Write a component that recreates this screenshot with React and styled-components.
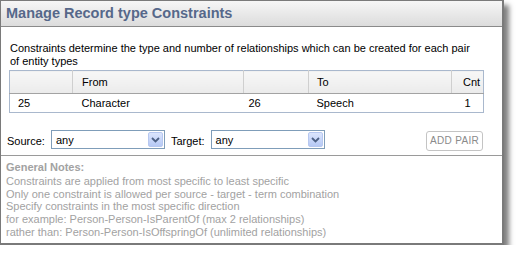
import React from 'react';
import styled, { createGlobalStyle } from 'styled-components';

const GlobalStyle = createGlobalStyle`
  html, body {
    margin: 0;
    padding: 0;
    background: #fff;
  }
  body {
    font-family: 'Liberation Sans', Arial, sans-serif;
    font-size: 11px;
    color: #000;
  }
`;

const columns = [
  { key: 'fromId', label: '', width: 63, pad: 8 },
  { key: 'from', label: 'From', width: 171, pad: 9 },
  { key: 'toId', label: '', width: 65, pad: 5 },
  { key: 'to', label: 'To', width: 143, pad: 8 },
  { key: 'cnt', label: 'Cnt', width: 32, pad: 11 },
];

const rows = [{ fromId: '25', from: 'Character', toId: '26', to: 'Speech', cnt: '1' }];

const notes = [
  'Constraints are applied from most specific to least specific',
  'Only one constraint is allowed per source - target - term combination',
  'Specify constraints in the most specific direction',
  'for example: Person-Person-IsParentOf (max 2 relationships)',
  'rather than: Person-Person-IsOffspringOf (unlimited relationships)',
];

const Chevron = () => (
  <svg width="9" height="6" viewBox="0 0 9 6">
    <path d="M1 1 L4.5 4.5 L8 1" fill="none" stroke="#4d6185" strokeWidth="1.8" />
  </svg>
);

const Dropdown = ({ value }) => (
  <Select>
    <SelectValue>{value}</SelectValue>
    <SelectArrow>
      <Chevron />
    </SelectArrow>
  </Select>
);

const App = () => (
  <>
    <GlobalStyle />
    <Window>
      <TitleBar>Manage Record type Constraints</TitleBar>

      <Body>
        <Intro>
          <div>Constraints determine the type and number of relationships which can be created for each pair</div>
          <div>of entity types</div>
        </Intro>

        <Table>
          <colgroup>
            {columns.map((c) => (
              <col key={c.key} style={{ width: c.width }} />
            ))}
          </colgroup>
          <thead>
            <tr>
              {columns.map((c) => (
                <Th key={c.key} pad={c.pad}>
                  {c.label}
                </Th>
              ))}
            </tr>
          </thead>
          <tbody>
            {rows.map((r, i) => (
              <tr key={i}>
                {columns.map((c) => (
                  <Td key={c.key} pad={c.key === 'cnt' ? 13 : c.pad}>
                    {r[c.key]}
                  </Td>
                ))}
              </tr>
            ))}
          </tbody>
        </Table>

        <Filters>
          <Label>Source:</Label>
          <Dropdown value="any" />
          <Label>Target:</Label>
          <Dropdown value="any" />
          <AddButton>ADD PAIR</AddButton>
        </Filters>
      </Body>

      <Notes>
        <NotesTitle>General Notes:</NotesTitle>
        {notes.map((n) => (
          <NoteLine key={n}>{n}</NoteLine>
        ))}
      </Notes>
    </Window>
  </>
);

export default App;

const Window = styled.div`
  width: 501px;
  border: 1px solid #7a7a7a;
  border-width: 1px 2px 2px 1px;
  background: #fff;
  box-shadow: 5px 5px 5px rgba(0, 0, 0, 0.5);
`;

const TitleBar = styled.div`
  height: 26px;
  box-sizing: border-box;
  padding: 4px 0 0 5px;
  background: linear-gradient(#f6f6f6, #dcdcdc);
  border-bottom: 1px solid #8a8a8a;
  color: #56688a;
  font-weight: bold;
  font-size: 14.5px;
  line-height: 17px;
`;

const Body = styled.div`
  padding: 15px 19px 0 8px;
`;

const Intro = styled.div`
  line-height: 13px;
  padding-left: 1px;
  margin-bottom: 2px;
  white-space: nowrap;
`;

const Table = styled.table`
  width: 474px;
  border-collapse: collapse;
  border: 1px solid #a9b8cd;
  table-layout: fixed;
`;

const Th = styled.th`
  box-sizing: border-box;
  height: 23px;
  padding: 0 0 0 ${({ pad }) => pad}px;
  text-align: left;
  font-weight: normal;
  background: linear-gradient(#f7f7f7, #ebebeb);
  border-bottom: 1px solid #a3a3a3;
  border-right: 1px solid #cfcfcf;

  &:last-child {
    border-right: none;
  }
`;

const Td = styled.td`
  box-sizing: border-box;
  height: 19px;
  padding: 0 0 0 ${({ pad }) => pad}px;
`;

const Filters = styled.div`
  display: flex;
  align-items: center;
  height: 21px;
  padding: 17px 0 4px;
  margin-left: -2px;
`;

const Label = styled.span`
  margin-right: 6px;

  & ~ & {
    margin-left: 6px;
  }
`;

const Select = styled.div`
  width: 114px;
  height: 19px;
  box-sizing: border-box;
  border: 1px solid #7f9db9;
  display: flex;
  align-items: center;
  justify-content: space-between;
  padding: 0 1px 0 4px;
  margin-top: -2px;
`;

const SelectValue = styled.span``;

const SelectArrow = styled.span`
  width: 15px;
  height: 15px;
  box-sizing: border-box;
  border: 1px solid #b7c8f0;
  border-radius: 2px;
  background: linear-gradient(#dbe5fd, #b6c9f5);
  display: flex;
  align-items: center;
  justify-content: center;
`;

const AddButton = styled.button`
  margin-left: auto;
  height: 20px;
  padding: 0 3px;
  border: 1px solid #c4c4c4;
  border-radius: 3px;
  background: #fff;
  color: #8a8a8a;
  font-family: 'Liberation Sans', Arial, sans-serif;
  font-size: 10px;
  letter-spacing: 0.3px;
`;

const Notes = styled.div`
  border-top: 1px solid #9a9a9a;
  padding: 5px 0 4px 5px;
  color: #a2a2a2;
  line-height: 12.8px;
`;

const NotesTitle = styled.div`
  font-weight: bold;
  margin-bottom: 1px;
`;

const NoteLine = styled.div``;
